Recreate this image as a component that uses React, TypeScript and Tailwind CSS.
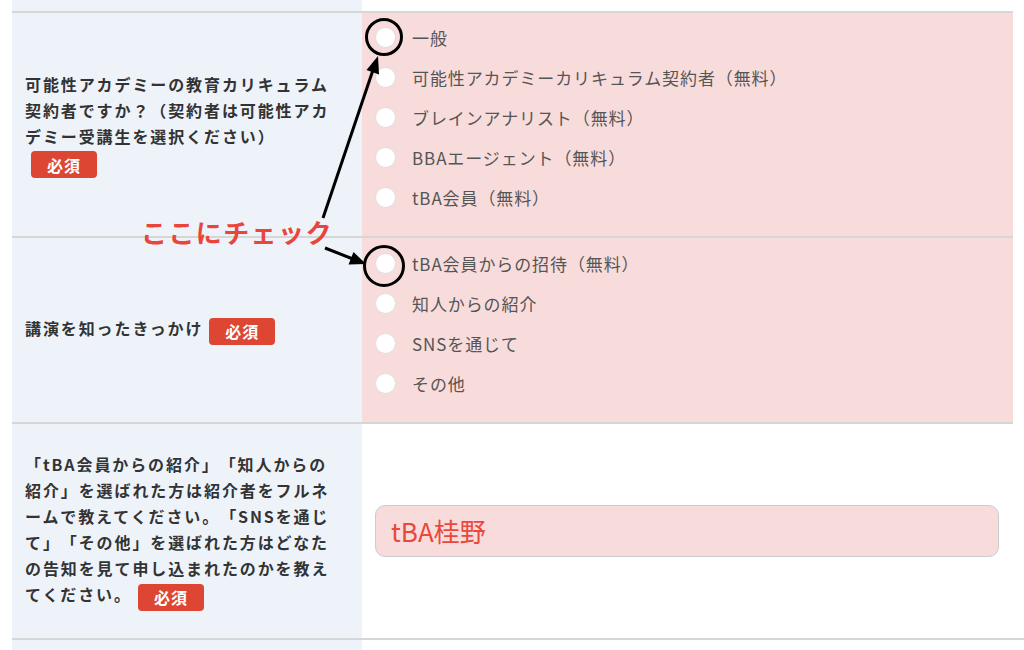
import React from "react";

const Badge = () => (
  <span className="inline-flex w-[66px] h-[27px] items-center justify-center rounded-[4px] bg-[#dc4632] text-white text-[16px] font-bold tracking-[1px] ml-[6px] align-middle leading-none">
    必須
  </span>
);

const Radio = ({ label }: { label: string }) => (
  <div className="h-[40px] flex items-center gap-[16px]">
    <span className="w-[21px] h-[21px] rounded-full bg-white border border-[#dedede] shrink-0" />
    <span className="text-[17px] text-[#555] tracking-[0.9px] leading-none [text-spacing-trim:space-all]">{label}</span>
  </div>
);

export default function App() {
  return (
    <div className="relative w-[1024px] h-[650px] bg-white overflow-hidden font-['Noto_Sans_CJK_JP','Noto_Sans',sans-serif]">
      <div className="ml-[12px] w-[1001px]">
        <div className="grid grid-cols-[350px_1fr] h-[11px]">
          <div className="bg-[#eef3fa]" />
          <div />
        </div>

        {/* Row 1 */}
        <div className="grid grid-cols-[350px_1fr] border-t-2 border-[#d6d6d6]">
          <div className="bg-[#eef3fa] flex items-center pl-[13px] pr-[10px]">
            <p className="text-[16px] font-bold leading-[26px] tracking-[1.9px] text-[#333] [text-spacing-trim:space-all]">
              可能性アカデミーの教育カリキュラム
              <br />
              契約者ですか？（契約者は可能性アカ
              <br />
              デミー受講生を選択ください）
              <br />
              <Badge />
            </p>
          </div>
          <div className="bg-[#f8dcdc] pl-[13px] pt-[4px] pb-[19px]">
            <Radio label="一般" />
            <Radio label="可能性アカデミーカリキュラム契約者（無料）" />
            <Radio label="ブレインアナリスト（無料）" />
            <Radio label="BBAエージェント（無料）" />
            <Radio label="tBA会員（無料）" />
          </div>
        </div>

        {/* Row 2 */}
        <div className="grid grid-cols-[350px_1fr] border-t-2 border-[#d6d6d6]">
          <div className="bg-[#eef3fa] flex items-center pl-[13px] pr-[10px]">
            <p className="text-[16px] font-bold leading-[26px] tracking-[1.9px] text-[#333] [text-spacing-trim:space-all]">
              講演を知ったきっかけ
              <Badge />
            </p>
          </div>
          <div className="bg-[#f8dcdc] pl-[13px] pt-[5px] pb-[19px]">
            <Radio label="tBA会員からの招待（無料）" />
            <Radio label="知人からの紹介" />
            <Radio label="SNSを通じて" />
            <Radio label="その他" />
          </div>
        </div>

        {/* Row 3 */}
        <div className="grid grid-cols-[350px_1fr] h-[216px] border-t-2 border-[#d6d6d6]">
          <div className="bg-[#eef3fa] flex items-center pl-[13px] pr-[10px]">
            <p className="text-[16px] font-bold leading-[26px] tracking-[1.9px] text-[#333] [text-spacing-trim:space-all]">
              「tBA会員からの紹介」「知人からの
              <br />
              紹介」を選ばれた方は紹介者をフルネ
              <br />
              ームで教えてください。「SNSを通じ
              <br />
              て」「その他」を選ばれた方はどなた
              <br />
              の告知を見て申し込まれたのかを教え
              <br />
              てください。
              <Badge />
            </p>
          </div>
          <div className="bg-white flex items-center pl-[13px] pr-[14px]">
            <div className="w-full h-[52px] rounded-[10px] border border-[#cccccc] bg-[#f8dcdc] flex items-center pl-[15px]">
              <span className="text-[26px] text-[#e8493a] leading-none">tBA桂野</span>
            </div>
          </div>
        </div>
      </div>

      <div className="h-[2px] ml-[12px] bg-[#d6d6d6]" />
      <div className="ml-[12px] w-[350px] h-[20px] bg-[#eef3fa]" />

      {/* Annotation overlay */}
      <svg
        className="absolute left-0 top-0 pointer-events-none"
        width="1024"
        height="650"
        viewBox="0 0 1024 650"
      >
        <circle cx="384" cy="37" r="17.5" fill="none" stroke="#000" strokeWidth="3" />
        <circle cx="384" cy="266" r="19.5" fill="none" stroke="#000" strokeWidth="3" />
        <line x1="323" y1="218" x2="373" y2="70" stroke="#000" strokeWidth="3" />
        <polygon points="378,56 379,74.5 366.5,70" fill="#000" />
        <line x1="325" y1="248" x2="353" y2="259" stroke="#000" strokeWidth="3" />
        <polygon points="366,264 348.5,264.5 353.5,252" fill="#000" />
      </svg>
      <div className="absolute left-[141px] top-[219px] text-[26px] font-bold text-[#e9453a] tracking-[1.4px] leading-none">
        ここにチェック
      </div>
    </div>
  );
}
